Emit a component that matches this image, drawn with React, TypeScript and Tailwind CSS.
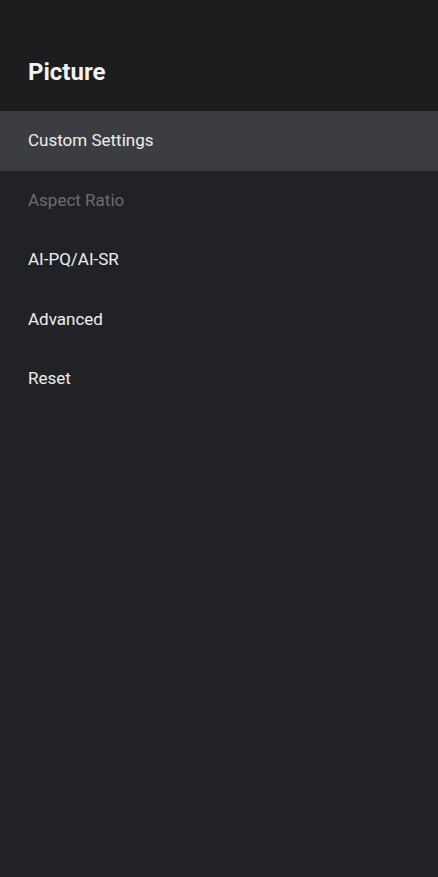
import React from "react";

const items = [
  { label: "Custom Settings", selected: true, disabled: false },
  { label: "Aspect Ratio", selected: false, disabled: true },
  { label: "AI-PQ/AI-SR", selected: false, disabled: false },
  { label: "Advanced", selected: false, disabled: false },
  { label: "Reset", selected: false, disabled: false },
];

export default function App() {
  return (
    <div className="w-[438px] h-[877px] bg-[#212226] flex flex-col" style={{ fontFamily: "Roboto, 'Noto Sans', sans-serif" }}>
      <div className="h-[111px] bg-[#1c1d1f] flex items-end pb-[24px] px-[28px]">
        <h1 className="text-[24px] font-bold text-[#f2f2f2] leading-[30px]">Picture</h1>
      </div>
      <div className="flex flex-col">
        {items.map((it) => (
          <div
            key={it.label}
            className={`h-[59.5px] flex items-center px-[28px] text-[17px] ${it.selected ? "bg-[#3c3d41]" : ""} ${it.disabled ? "text-[#6b6c70]" : "text-[#eeeeee]"}`}
          >
            {it.label}
          </div>
        ))}
      </div>
    </div>
  );
}
